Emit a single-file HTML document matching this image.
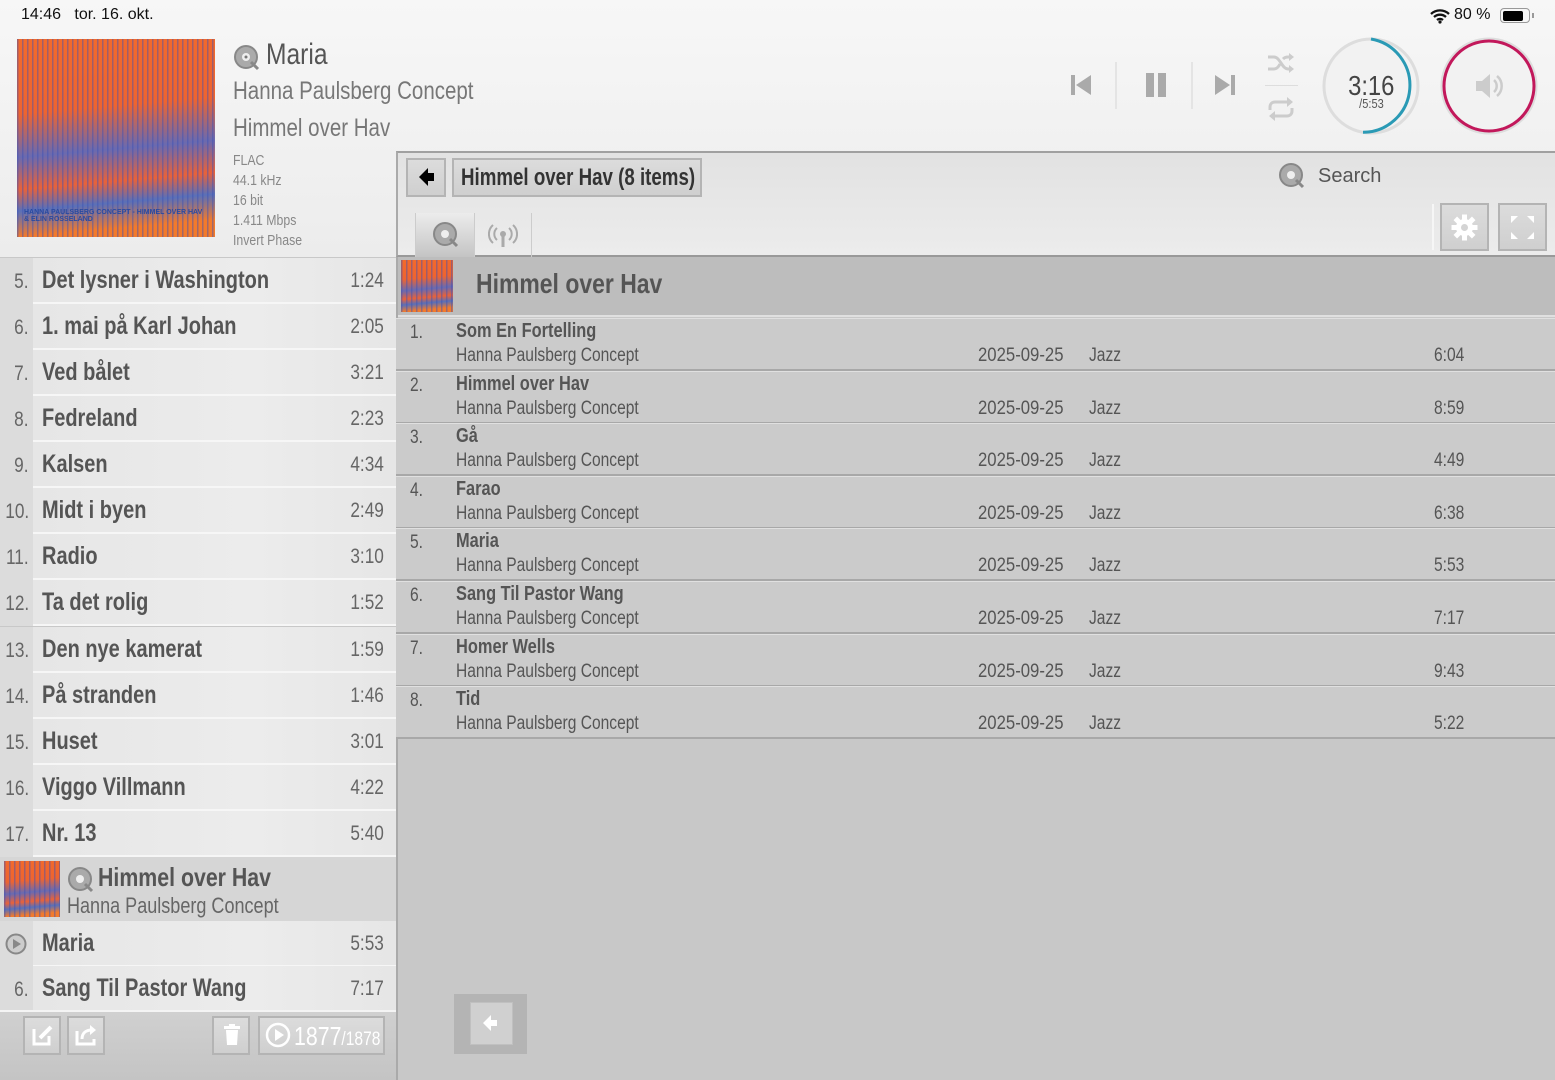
<!DOCTYPE html>
<html><head><meta charset="utf-8"><style>
*{margin:0;padding:0;box-sizing:border-box}
body{width:1555px;height:1080px;overflow:hidden;background:#c8c8c8;font-family:"Liberation Sans",sans-serif;color:#555;position:relative}
.abs{position:absolute}
.c{transform:scaleX(.82);transform-origin:0 0;white-space:nowrap}
.top{left:0;top:0;width:1555px;height:257px;background:linear-gradient(#f7f7f7,#ececec)}
.art{background:repeating-linear-gradient(90deg,rgba(60,80,180,.45) 0 1.5px,transparent 1.5px 5px),linear-gradient(175deg,#f26a2c 0,#ee6430 35%,#6a6ab0 55%,#e8623a 70%,#5a70b8 80%,#f27a2c 92%)}
.sb{font-size:16px;color:#111}
.meta{font-size:15px;color:#888;line-height:20px}
.lrow{left:0;width:396px;height:46px}
.lrow .n{position:absolute;left:0;top:0;width:33px;height:46px;background:#dcdcdc;font-size:21px;color:#666;text-align:right;padding-top:12px;padding-right:4px}
.lrow .n span{display:inline-block;transform:scaleX(.82);transform-origin:100% 0}
.lrow .m{position:absolute;left:33px;top:0;right:0;height:46px;background:linear-gradient(90deg,#e6e6e6,#ececec 60%,#e6e6e6);border-bottom:2px solid #f6f6f6}
.lrow .t{position:absolute;left:9px;top:8px;font-size:25px;font-weight:bold;color:#555;transform:scaleX(.8);transform-origin:0 0;white-space:nowrap}
.lrow .d{position:absolute;right:12px;top:11px;font-size:21px;color:#666;transform:scaleX(.82);transform-origin:100% 0}
.rrow{left:396px;width:1159px;height:53px;border-bottom:2px solid #a8a8a8;background:#cbcbcb;border-top:1px solid #e0e0e0}
.rrow span{position:absolute;font-size:19px;color:#555;transform:scaleX(.82);transform-origin:0 0;white-space:nowrap}
.rrow .no{left:14px;top:3px}
.rrow .ti{left:60px;top:1px;font-weight:bold;font-size:20px}
.rrow .ar{left:60px;top:26px}
.rrow .dt{left:582px;top:26px;transform:scaleX(.88)!important}
.rrow .ge{left:693px;top:26px}
.rrow .du{left:1038px;top:26px}
.btn{background:linear-gradient(#dcdcdc,#cfcfcf);border:2px solid #b4b4b4}
</style></head><body>
<div class="abs top"></div>
<div class="abs sb" style="left:21px;top:6px">14:46&nbsp;&nbsp; tor. 16. okt.</div>
<div class="abs sb" style="left:1454px;top:6px">80 %</div>
<svg class="abs" style="left:1429px;top:8px" width="22" height="16" viewBox="0 0 22 16"><path d="M2 6a13 13 0 0 1 18 0M5 9a9 9 0 0 1 12 0M8 12a4.5 4.5 0 0 1 6 0" stroke="#111" stroke-width="2.3" fill="none"/><circle cx="11" cy="14" r="1.6" fill="#111"/></svg>
<div class="abs" style="left:1500px;top:8px;width:30px;height:15px;border:1.5px solid #999;border-radius:4px;padding:1.5px"><div style="width:80%;height:100%;background:#000;border-radius:2px"></div></div>
<div class="abs" style="left:1532px;top:13px;width:2px;height:5px;background:#999"></div>

<div class="abs art" style="left:17px;top:39px;width:198px;height:198px"></div>
<div class="abs" style="left:24px;top:209px;font-size:7px;font-weight:bold;color:#2a4aa0;line-height:7px">HANNA PAULSBERG CONCEPT - HIMMEL OVER HAV<br>&amp; ELIN ROSSELAND</div>
<svg class="abs" style="left:233px;top:44px" width="28" height="28" viewBox="0 0 28 28"><circle cx="13" cy="13" r="11" fill="#aaa" stroke="#888" stroke-width="2"/><circle cx="13" cy="13" r="4" fill="#eee"/><circle cx="13" cy="13" r="1.5" fill="#777"/><path d="M18 18l7 7" stroke="#888" stroke-width="3"/></svg>
<div class="abs c" style="left:266px;top:38px;font-size:30px;color:#555">Maria</div>
<div class="abs c" style="left:233px;top:77px;font-size:25px;color:#777">Hanna Paulsberg Concept</div>
<div class="abs c" style="left:233px;top:114px;font-size:25px;color:#777">Himmel over Hav</div>
<div class="abs meta c" style="left:233px;top:151px">FLAC<br>44.1 kHz<br>16 bit<br>1.411 Mbps<br>Invert Phase</div>

<!-- controls -->
<svg class="abs" style="left:1068px;top:72px" width="26" height="26"><rect x="3" y="3" width="4" height="20" fill="#aaa"/><path d="M23 3v20L8 13z" fill="#aaa"/></svg>
<div class="abs" style="left:1115px;top:62px;width:2px;height:47px;background:#e4e4e4"></div>
<div class="abs" style="left:1146px;top:73px;width:8px;height:24px;background:#aaa"></div>
<div class="abs" style="left:1158px;top:73px;width:8px;height:24px;background:#aaa"></div>
<div class="abs" style="left:1191px;top:62px;width:2px;height:47px;background:#e4e4e4"></div>
<svg class="abs" style="left:1212px;top:72px" width="26" height="26"><path d="M3 3v20l15-10z" fill="#aaa"/><rect x="19" y="3" width="4" height="20" fill="#aaa"/></svg>
<div class="abs" style="left:1265px;top:85px;width:33px;height:1px;background:#ddd"></div>
<svg class="abs" style="left:1266px;top:50px" width="30" height="26" fill="none" stroke="#ccc" stroke-width="3"><path d="M2 7h6c6 0 8 12 14 12h4M2 19h6c3 0 5-3 6-5M17 9c1-1 3-2 5-2h4"/><path d="M23 3l5 4-5 4zM23 15l5 4-5 4z" fill="#ccc" stroke="none"/></svg>
<svg class="abs" style="left:1266px;top:96px" width="30" height="26" fill="none" stroke="#ccc" stroke-width="3"><path d="M4 14v-3c0-3 2-5 5-5h15M26 12v3c0 3-2 5-5 5H6"/><path d="M21 1l6 5-6 5zM9 15l-6 5 6 5z" fill="#ccc" stroke="none"/></svg>
<svg class="abs" style="left:1320px;top:35px" width="102" height="102"><circle cx="51" cy="51" r="47" fill="#f2f2f2" stroke="#ddd" stroke-width="3"/><path d="M51 4A47 47 0 0 1 43 97.3" stroke="#2a9ab5" stroke-width="3" fill="none"/></svg>
<div class="abs" style="left:1320px;top:70px;width:102px;text-align:center;font-size:28px;color:#444"><span style="display:inline-block;transform:scaleX(.85)">3:16</span></div>
<div class="abs" style="left:1320px;top:96px;width:102px;text-align:center;font-size:13px;color:#555"><span style="display:inline-block;transform:scaleX(.85)">/5:53</span></div>
<svg class="abs" style="left:1439px;top:35px" width="100" height="102"><circle cx="50" cy="51" r="47" fill="#f2f2f2" stroke="#ddd" stroke-width="3"/><circle cx="50" cy="51" r="45" stroke="#c2185b" stroke-width="3" fill="none"/><path d="M37 46h6l8-7v24l-8-7h-6z" fill="#ccc"/><path d="M55 45a8 8 0 0 1 0 12M58 41a13 13 0 0 1 0 20" stroke="#ccc" stroke-width="2.5" fill="none"/></svg>

<!-- right toolbar -->
<div class="abs" style="left:396px;top:151px;width:1159px;height:106px;background:linear-gradient(#e2e2e2,#ececec);border-top:2px solid #a0a0a0;border-left:2px solid #aaa;border-bottom:2px solid #999"></div>
<div class="abs btn" style="left:406px;top:158px;width:40px;height:39px"></div>
<svg class="abs" style="left:417px;top:166px" width="18" height="22"><path d="M2 11l9-9v5h6v8h-6v5z" fill="#000"/></svg>
<div class="abs btn" style="left:452px;top:158px;width:250px;height:39px"></div>
<div class="abs" style="left:461px;top:164px;font-size:24px;font-weight:bold;color:#333;transform:scaleX(.78);transform-origin:0 0;white-space:nowrap">Himmel over Hav (8 items)</div>
<svg class="abs" style="left:1278px;top:162px" width="28" height="28"><circle cx="13" cy="13" r="11" fill="#aaa" stroke="#888" stroke-width="2"/><circle cx="13" cy="13" r="4" fill="#eee"/><path d="M18 18l7 7" stroke="#888" stroke-width="3"/></svg>
<div class="abs" style="left:1318px;top:165px;font-size:20px;color:#555">Search</div>
<div class="abs" style="left:415px;top:213px;width:60px;height:44px;background:linear-gradient(#ececec,#c4c4c4);border-left:1px solid #ccc;border-right:1px solid #ccc"></div>
<div class="abs" style="left:531px;top:213px;width:1px;height:44px;background:#ccc"></div>
<svg class="abs" style="left:432px;top:221px" width="28" height="28"><circle cx="13" cy="13" r="11" fill="#aaa" stroke="#888" stroke-width="2"/><circle cx="13" cy="13" r="4" fill="#eee"/><path d="M18 18l7 7" stroke="#888" stroke-width="3"/></svg>
<svg class="abs" style="left:488px;top:222px" width="30" height="26"><circle cx="15" cy="12" r="3" fill="#aaa"/><path d="M15 13v12" stroke="#aaa" stroke-width="3"/><path d="M9 6a8 8 0 0 0 0 12M21 6a8 8 0 0 1 0 12M5 3a12 12 0 0 0 0 18M25 3a12 12 0 0 1 0 18" stroke="#aaa" stroke-width="2" fill="none"/></svg>
<div class="abs" style="left:1432px;top:204px;width:2px;height:46px;background:#f6f6f6"></div>
<div class="abs btn" style="left:1440px;top:203px;width:49px;height:48px"></div>
<svg class="abs" style="left:1450px;top:213px" width="29" height="29" viewBox="0 0 29 29"><g fill="#fff" transform="translate(14.5 14.5)"><circle r="8.5"/><rect x="-2.5" y="-13" width="5" height="26"/><rect x="-2.5" y="-13" width="5" height="26" transform="rotate(45)"/><rect x="-2.5" y="-13" width="5" height="26" transform="rotate(90)"/><rect x="-2.5" y="-13" width="5" height="26" transform="rotate(135)"/><circle r="3.5" fill="#d4d4d4"/></g></svg>
<div class="abs btn" style="left:1498px;top:203px;width:49px;height:48px"></div>
<svg class="abs" style="left:1510px;top:215px" width="25" height="25" fill="#fff"><path d="M1 1h7l-7 7zM24 1h-7l7 7zM1 24h7l-7-7zM24 24h-7l7-7z"/></svg>

<!-- right content -->
<div class="abs" style="left:396px;top:257px;width:1159px;height:823px;background:#c8c8c8;border-left:2px solid #aaa"></div>
<div class="abs" style="left:398px;top:257px;width:1157px;height:60px;background:#bdbdbd;border-bottom:2px solid #e0e0e0"></div>
<div class="abs art" style="left:401px;top:260px;width:52px;height:52px"></div>
<div class="abs c" style="left:476px;top:268px;font-size:28px;font-weight:bold;color:#555">Himmel over Hav</div>

<div class="abs rrow" style="top:318px"><span class="no">1.</span><span class="ti">Som En Fortelling</span><span class="ar">Hanna Paulsberg Concept</span><span class="dt">2025-09-25</span><span class="ge">Jazz</span><span class="du">6:04</span></div>
<div class="abs rrow" style="top:371px"><span class="no">2.</span><span class="ti">Himmel over Hav</span><span class="ar">Hanna Paulsberg Concept</span><span class="dt">2025-09-25</span><span class="ge">Jazz</span><span class="du">8:59</span></div>
<div class="abs rrow" style="top:423px"><span class="no">3.</span><span class="ti">Gå</span><span class="ar">Hanna Paulsberg Concept</span><span class="dt">2025-09-25</span><span class="ge">Jazz</span><span class="du">4:49</span></div>
<div class="abs rrow" style="top:476px"><span class="no">4.</span><span class="ti">Farao</span><span class="ar">Hanna Paulsberg Concept</span><span class="dt">2025-09-25</span><span class="ge">Jazz</span><span class="du">6:38</span></div>
<div class="abs rrow" style="top:528px"><span class="no">5.</span><span class="ti">Maria</span><span class="ar">Hanna Paulsberg Concept</span><span class="dt">2025-09-25</span><span class="ge">Jazz</span><span class="du">5:53</span></div>
<div class="abs rrow" style="top:581px"><span class="no">6.</span><span class="ti">Sang Til Pastor Wang</span><span class="ar">Hanna Paulsberg Concept</span><span class="dt">2025-09-25</span><span class="ge">Jazz</span><span class="du">7:17</span></div>
<div class="abs rrow" style="top:634px"><span class="no">7.</span><span class="ti">Homer Wells</span><span class="ar">Hanna Paulsberg Concept</span><span class="dt">2025-09-25</span><span class="ge">Jazz</span><span class="du">9:43</span></div>
<div class="abs rrow" style="top:686px"><span class="no">8.</span><span class="ti">Tid</span><span class="ar">Hanna Paulsberg Concept</span><span class="dt">2025-09-25</span><span class="ge">Jazz</span><span class="du">5:22</span></div>

<div class="abs" style="left:454px;top:994px;width:73px;height:60px;background:#b4b4b4"></div>
<div class="abs" style="left:470px;top:1002px;width:43px;height:43px;background:#d0d0d0;border:1px solid #c0c0c0"></div>
<svg class="abs" style="left:481px;top:1013px" width="20" height="20"><path d="M2 10l8-8v5h6v6h-6v5z" fill="#fff"/></svg>

<!-- left list -->
<div class="abs lrow" style="top:258px"><div class="n"><span>5.</span></div><div class="m"><div class="t">Det lysner i Washington</div><div class="d">1:24</div></div></div>
<div class="abs lrow" style="top:304px"><div class="n"><span>6.</span></div><div class="m"><div class="t">1. mai på Karl Johan</div><div class="d">2:05</div></div></div>
<div class="abs lrow" style="top:350px"><div class="n"><span>7.</span></div><div class="m"><div class="t">Ved bålet</div><div class="d">3:21</div></div></div>
<div class="abs lrow" style="top:396px"><div class="n"><span>8.</span></div><div class="m"><div class="t">Fedreland</div><div class="d">2:23</div></div></div>
<div class="abs lrow" style="top:442px"><div class="n"><span>9.</span></div><div class="m"><div class="t">Kalsen</div><div class="d">4:34</div></div></div>
<div class="abs lrow" style="top:488px"><div class="n"><span>10.</span></div><div class="m"><div class="t">Midt i byen</div><div class="d">2:49</div></div></div>
<div class="abs lrow" style="top:534px"><div class="n"><span>11.</span></div><div class="m"><div class="t">Radio</div><div class="d">3:10</div></div></div>
<div class="abs lrow" style="top:580px"><div class="n"><span>12.</span></div><div class="m"><div class="t">Ta det rolig</div><div class="d">1:52</div></div></div>
<div class="abs lrow" style="top:627px"><div class="n"><span>13.</span></div><div class="m"><div class="t">Den nye kamerat</div><div class="d">1:59</div></div></div>
<div class="abs lrow" style="top:673px"><div class="n"><span>14.</span></div><div class="m"><div class="t">På stranden</div><div class="d">1:46</div></div></div>
<div class="abs lrow" style="top:719px"><div class="n"><span>15.</span></div><div class="m"><div class="t">Huset</div><div class="d">3:01</div></div></div>
<div class="abs lrow" style="top:765px"><div class="n"><span>16.</span></div><div class="m"><div class="t">Viggo Villmann</div><div class="d">4:22</div></div></div>
<div class="abs lrow" style="top:811px"><div class="n"><span>17.</span></div><div class="m"><div class="t">Nr. 13</div><div class="d">5:40</div></div></div>
<div class="abs" style="left:0;top:857px;width:396px;height:64px;background:#d6d6d6"></div>
<div class="abs art" style="left:4px;top:861px;width:56px;height:56px"></div>
<svg class="abs" style="left:67px;top:866px" width="28" height="28"><circle cx="13" cy="13" r="11" fill="#aaa" stroke="#888" stroke-width="2"/><circle cx="13" cy="13" r="4" fill="#eee"/><path d="M18 18l7 7" stroke="#888" stroke-width="3"/></svg>
<div class="abs c" style="left:98px;top:862px;font-size:26px;font-weight:bold;color:#555">Himmel over Hav</div>
<div class="abs c" style="left:67px;top:893px;font-size:22px;color:#666">Hanna Paulsberg Concept</div>
<div class="abs lrow" style="top:921px"><div class="n"></div><div class="m"><div class="t">Maria</div><div class="d">5:53</div></div></div>
<svg class="abs" style="left:5px;top:933px" width="22" height="22"><circle cx="11" cy="11" r="9.5" fill="#ccc" stroke="#888" stroke-width="2"/><path d="M8 6v10l8-5z" fill="#888"/></svg>
<div class="abs lrow" style="top:966px"><div class="n"><span>6.</span></div><div class="m" style="border-bottom:none"><div class="t">Sang Til Pastor Wang</div><div class="d">7:17</div></div></div>
<div class="abs" style="left:0;top:1010px;width:396px;height:70px;background:linear-gradient(#d0d0d0,#c4c4c4);border-top:2px solid #f4f4f4"></div>
<div class="abs btn" style="left:23px;top:1016px;width:38px;height:39px"></div>
<div class="abs btn" style="left:67px;top:1016px;width:38px;height:39px"></div>
<div class="abs btn" style="left:212px;top:1016px;width:38px;height:39px"></div>
<div class="abs btn" style="left:258px;top:1016px;width:127px;height:39px"></div>
<svg class="abs" style="left:31px;top:1023px" width="24" height="24" fill="none" stroke="#fff" stroke-width="3"><path d="M3 6v15h15v-8"/><path d="M9 15l11-11" stroke-width="4"/></svg>
<svg class="abs" style="left:74px;top:1023px" width="26" height="24" fill="none" stroke="#fff" stroke-width="3"><path d="M3 8v13h17v-5"/><path d="M8 16c0-6 4-9 10-9" /><path d="M16 2l6 5-6 5z" fill="#fff" stroke="none"/></svg>
<svg class="abs" style="left:222px;top:1023px" width="20" height="24" fill="#fff"><rect x="2" y="3" width="16" height="3"/><rect x="7" y="1" width="6" height="3"/><path d="M4 7h12l-1 15H5z"/></svg>
<svg class="abs" style="left:265px;top:1022px" width="26" height="26"><circle cx="13" cy="13" r="11" fill="none" stroke="#fff" stroke-width="2.5"/><path d="M10 7v12l9-6z" fill="#fff"/></svg>
<div class="abs c" style="left:294px;top:1021px;font-size:26px;color:#fff">1877<span style="font-size:19px">/1878</span></div>
</body></html>
